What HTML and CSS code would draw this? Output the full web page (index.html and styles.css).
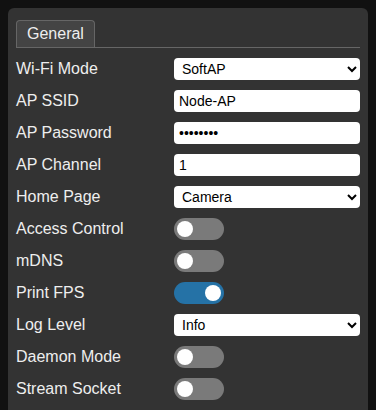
FILE: index.html
```html
<!DOCTYPE html>
<html>
<head>
<meta charset="utf-8">
<link rel="stylesheet" href="styles.css">
</head>
<body>
<div class="panel">
  <div class="tabs"><div class="tab">General</div></div>
  <div class="rows">
    <div class="row"><label class="lbl">Wi-Fi Mode</label>
      <select class="field sel"><option>SoftAP</option><option>Station</option></select></div>
    <div class="row"><label class="lbl">AP SSID</label>
      <input class="field txt" type="text" value="Node-AP"></div>
    <div class="row"><label class="lbl">AP Password</label>
      <input class="field txt" type="password" value="12345678"></div>
    <div class="row"><label class="lbl">AP Channel</label>
      <input class="field txt" type="text" value="1"></div>
    <div class="row"><label class="lbl">Home Page</label>
      <select class="field sel"><option>Camera</option></select></div>
    <div class="row"><label class="lbl">Access Control</label>
      <span class="toggle"><span class="knob"></span></span></div>
    <div class="row"><label class="lbl">mDNS</label>
      <span class="toggle"><span class="knob"></span></span></div>
    <div class="row"><label class="lbl">Print FPS</label>
      <span class="toggle on"><span class="knob"></span></span></div>
    <div class="row"><label class="lbl">Log Level</label>
      <select class="field sel"><option>Info</option></select></div>
    <div class="row"><label class="lbl">Daemon Mode</label>
      <span class="toggle"><span class="knob"></span></span></div>
    <div class="row"><label class="lbl">Stream Socket</label>
      <span class="toggle"><span class="knob"></span></span></div>
  </div>
</div>
</body>
</html>
```
FILE: styles.css
```css
html, body {
  height: 100%;
}
body {
  margin: 0;
  padding: 8px 8px 0 8px;
  box-sizing: border-box;
  background: #111111;
  font-family: "Liberation Sans", Arial, sans-serif;
  overflow: hidden;
}
.panel {
  background: #333333;
  border-radius: 6px 6px 0 0;
  padding: 12px 8px 0 8px;
  min-height: 420px;
  box-sizing: border-box;
}
.tabs {
  display: flex;
  border-bottom: 1px solid #666666;
}
.tab {
  background: #444444;
  border: 1px solid #666666;
  border-bottom: none;
  border-radius: 4px 4px 0 0;
  color: #eeeeee;
  font-size: 16px;
  line-height: 26px;
  padding: 0 10px;
}
.rows {
  display: flex;
  flex-direction: column;
  gap: 10px;
  padding-top: 10px;
}
.row {
  display: flex;
  align-items: center;
  height: 22px;
}
.lbl {
  width: 158px;
  flex: none;
  color: #eeeeee;
  font-size: 16px;
}
.field {
  box-sizing: border-box;
  width: 186px;
  height: 22px;
  border: none;
  border-radius: 4px;
  background: #ffffff;
  color: #000000;
  font-family: "Liberation Sans", Arial, sans-serif;
  font-size: 14px;
  margin: 0;
  outline: none;
}
.txt {
  padding: 0 5px;
}
.sel {
  padding: 0 4px;
}
.toggle {
  position: relative;
  display: block;
  width: 50px;
  height: 22px;
  border-radius: 11px;
  background: #7a7a7a;
}
.toggle.on {
  background: #2572a6;
}
.knob {
  position: absolute;
  top: 3px;
  left: 3px;
  width: 16px;
  height: 16px;
  border-radius: 50%;
  background: #ffffff;
}
.toggle.on .knob {
  left: 31px;
}
```
